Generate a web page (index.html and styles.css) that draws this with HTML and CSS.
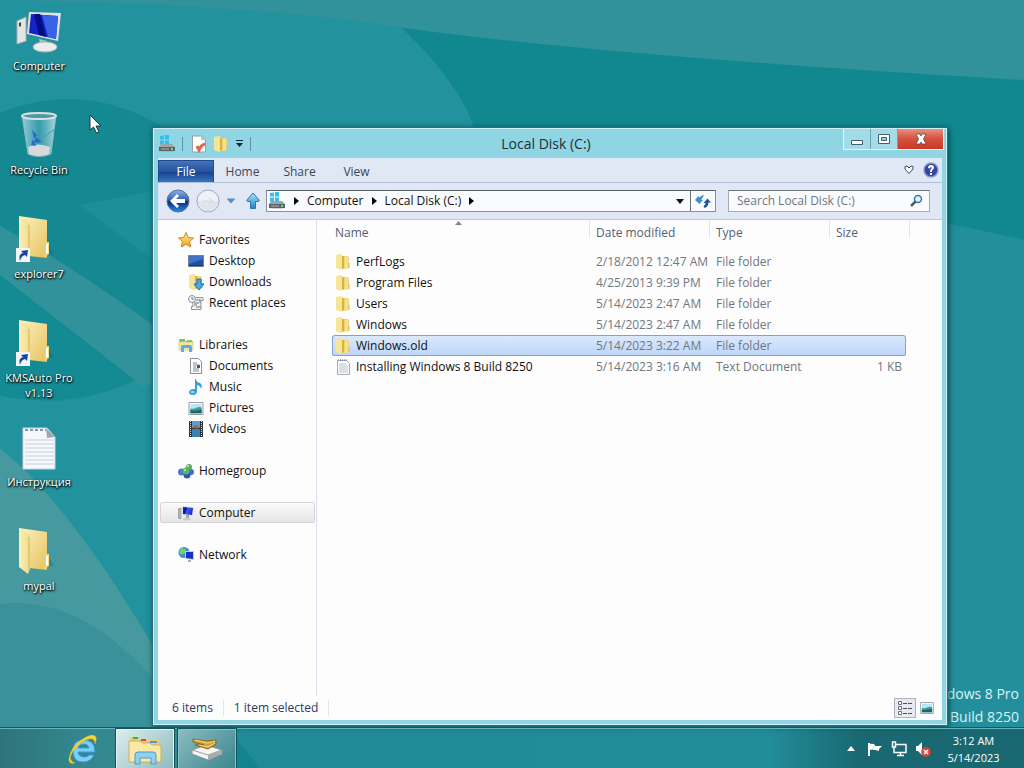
FILE: index.html
```html
<!DOCTYPE html>
<html lang="en">
<head>
<meta charset="utf-8">
<title>Local Disk (C:)</title>
<link rel="stylesheet" href="styles.css">
</head>
<body>
<svg class="defs" width="0" height="0" aria-hidden="true">
  <defs>
    <linearGradient id="gFold" x1="0" x2="1" y2="1"><stop offset="0" stop-color="#fdf3c0"/><stop offset="1" stop-color="#e6c260"/></linearGradient>
    <linearGradient id="gFlap" x1="0" x2="1"><stop offset="0" stop-color="#fbf0b8"/><stop offset="1" stop-color="#f0da8c"/></linearGradient>
    <linearGradient id="gGrey" x1="0" x2="1"><stop offset="0" stop-color="#fafafa"/><stop offset="1" stop-color="#b4b8ba"/></linearGradient>
    <linearGradient id="gScreen" x1="0" x2="1" y2=".3"><stop offset="0" stop-color="#1428c8"/><stop offset=".4" stop-color="#0a10a0"/><stop offset=".45" stop-color="#3a62e8"/><stop offset="1" stop-color="#1a30d0"/></linearGradient>
    <linearGradient id="gBlue" x1="0" x2="0" y2="1"><stop offset="0" stop-color="#8fb4e8"/><stop offset=".48" stop-color="#2a58b0"/><stop offset=".52" stop-color="#0a2878"/><stop offset="1" stop-color="#2c8ce8"/></linearGradient>
    <linearGradient id="gSky" x1="0" x2="0" y2="1"><stop offset="0" stop-color="#a8e6fa"/><stop offset="1" stop-color="#1f84c8"/></linearGradient>
    <linearGradient id="gGlass" x1="0" x2="1"><stop offset="0" stop-color="#b8e0ec" stop-opacity=".8"/><stop offset=".5" stop-color="#5fb0c4" stop-opacity=".5"/><stop offset="1" stop-color="#c4e6ee" stop-opacity=".85"/></linearGradient>
    <linearGradient id="gStar" x1="0" x2="0" y2="1"><stop offset="0" stop-color="#fff08a"/><stop offset="1" stop-color="#f5a020"/></linearGradient>
    <symbol id="bigFolder" viewBox="0 0 48 48">
      <path d="M30 41l9-4-5-7z" fill="#0c5560" opacity=".25"/>
      <path d="M4 0l28 4v38l-18-2z" fill="url(#gFold)"/>
      <path d="M31 26h3v12l-4 3z" fill="#f3dc8c"/><path d="M31 28h2v9h-2z" fill="#fff"/>
      <path d="M4 0l9 6q2 1 2 4v31l-2 5L4 39z" fill="url(#gFlap)"/>
      <path d="M14 9v34" stroke="#d8b458"/>
    </symbol>
    <symbol id="shortcut" viewBox="0 0 14 14">
      <path d="M0 0h14v14H0z" fill="#f4f6f8"/>
      <path d="M4 13q-2-7 3-8L5 3l7-1-1 7-2-2q-4 1-5 6z" fill="#1b4697"/>
    </symbol>
    <symbol id="folder" viewBox="0 0 16 16">
      <path d="M6 2h7l1 2v10l-7 1z" fill="#ecd477"/>
      <path d="M1 1l5-1 2 2v12l-2 2-5-2z" fill="#f6e596"/><path d="M7 2h2v12l-2 1z" fill="#d9b340"/><path d="M10 3h3v8l1 3-4 1z" fill="#f5e18b"/><path d="M14 9v5" stroke="#cfb874"/>
    </symbol>
    <symbol id="textDoc" viewBox="0 0 16 16">
      <path d="M2.500 1.500h9l3 3v11h-12z" fill="#fafbfc" stroke="#a3acb1"/>
      <path d="M4 5h7M4 7h9M4 9h9M4 11h9M4 13h9" stroke="#bcc5cc"/><path d="M3 1h9" stroke="#67747c" stroke-dasharray="1 1"/>
    </symbol>
    <symbol id="drive" viewBox="0 0 18 18">
      <path d="M2 1l4-.5v4H2zM7 0l4-.5V4.500H7zM2 5.500h4v4H2zM7 5.500h4v4H7z" fill="#35bff0"/>
      <path d="M3 9h11l3 3v4q-8 1-16 0v-4z" fill="#9da5a8"/><path d="M1 12h16v4H1z" fill="#59646a"/><path d="M3 14h8" stroke="#a8b4b8"/><path d="M13 13h2v2h-2z" fill="#63e06a"/>
    </symbol>
    <symbol id="pc" viewBox="0 0 16 16">
      <path d="M0 4l3-1v11l-3-1z" fill="#b4b8bc" stroke="#73787c" stroke-width=".5"/>
      <path d="M4 1l12 1-1 9-11-1z" fill="#dcdfe2"/><path d="M5 2l10 1-1 7-9-1z" fill="url(#gScreen)"/>
      <path d="M8 10h3v3h-3z" fill="#9fa4a8"/><ellipse cx="9" cy="14" rx="4" ry="1.500" fill="#c8ccd0"/>
    </symbol>
    <symbol id="picture" viewBox="0 0 16 14">
      <path d="M.5.500h15v13H.5z" fill="#fff" stroke="#8a9398"/><path d="M2 2h12v10H2z" fill="#b9e4f6"/><path d="M2 7q4 1 7-1 3-1 5 0v6H2z" fill="#3c9c98"/><path d="M2 9q5 1 12-1v4H2z" fill="#1f6668"/>
    </symbol>
  </defs>
</svg>

<main class="desktop">
  <svg class="wallpaper" viewBox="0 0 1024 768" preserveAspectRatio="none" aria-hidden="true">
    <path d="M0 0h1024v768H0z" fill="#118890"/>
    <path d="M0 0h370Q455 70 475 130L153 400H0z" fill="#22929e"/>
    <path d="M0 0h1024v80Q600 56 390 26 250 4 0 0z" fill="#31929b"/>
    <path d="M0 113Q80 80 160 125V340L0 225z" fill="#148991"/>
    <path d="M80 205l80-15v75z" fill="#1d8f99"/>
    <path d="M0 226Q70 265 160 330V400L110 362 0 275z" fill="#32929b"/>
    <path d="M0 275l135 105q-60 30-135 16z" fill="#148b94"/>
    <path d="M0 396q80 14 160-15v270L0 560z" fill="#22929e"/>
    <path d="M0 448Q70 505 153 646L200 728H0z" fill="#46999f"/>
    <path d="M0 604q100-12 190 124l30 40H0z" fill="#3a919a"/>
    <path d="M152 640l50 128h872V250L940 222v506z" fill="#238f9c"/>
    <path d="M225 725l35 43H210z" fill="#118890"/>
  </svg>

  <div class="watermark"><p>Windows 8 Pro</p><p>Build 8250</p></div>

  <nav class="shortcuts" aria-label="Desktop">
    <a class="shortcut" href="#">
      <svg viewBox="0 0 48 48"><path d="M2 13l9-4v24l-9 3z" fill="#e4e4e2" stroke="#a9acac"/><path d="M4 15l2-1v4l-2 1z" fill="#444"/><path d="M14 4l32 1-3 28-31-7z" fill="#dfe2e0"/><path d="M16 6l27 2-2 23-27-6z" fill="#1424c4"/><path d="M19 6l6 0 6 23-7-2z" fill="#050c84"/><path d="M27 7l16 1-2 23-8-2z" fill="#3863e4"/><path d="M24 31l8 2v6h-6z" fill="#b9bdbc"/><ellipse cx="30" cy="39" rx="12" ry="5" fill="#eceeec" stroke="#afb5b3"/></svg>
      <span>Computer</span></a>
    <a class="shortcut" href="#">
      <svg viewBox="0 0 48 48"><path d="M7 3h34l-5 39q-12 5-23 0z" fill="url(#gGlass)" stroke="#91bac4"/><path d="M13 35q10-5 22 0l-1 7q-10 4-20 0z" fill="#d6dadb"/><ellipse cx="24" cy="4" rx="17" ry="3" fill="#4d9aa8" stroke="#d8e1e3" stroke-width="2"/><path d="M17 18l5 5-3 4zM21 25l6 5-8 1zM18 27l-2 6 5 1z" fill="#2b68cc"/><path d="M40 17L27 26" stroke="#4a9cac"/></svg>
      <span>Recycle Bin</span></a>
    <a class="shortcut" href="#">
      <svg viewBox="0 0 48 48"><use href="#bigFolder" width="48" height="48"/><use href="#shortcut" x="1" y="32" width="14" height="14"/></svg>
      <span>explorer7</span></a>
    <a class="shortcut" href="#">
      <svg viewBox="0 0 48 48"><use href="#bigFolder" width="48" height="48"/><use href="#shortcut" x="1" y="32" width="14" height="14"/></svg>
      <span>KMSAuto Pro v1.13</span></a>
    <a class="shortcut" href="#">
      <svg viewBox="0 0 48 48"><path d="M8 4h24l8 9v32H8z" fill="#f6f8fc" stroke="#c6d2dc"/><path d="M31 4l1 10 8-1z" fill="#9aa8b0"/><path d="M10 16h29M10 20h29M10 24h29M10 28h29M10 32h29M10 36h29M10 40h29" stroke="#c2cfe0"/><path d="M10 6h21" stroke="#7f9cac" stroke-width="2" stroke-dasharray="3 2"/></svg>
      <span>Инструкция</span></a>
    <a class="shortcut" href="#">
      <svg viewBox="0 0 48 48"><use href="#bigFolder" width="48" height="48"/></svg>
      <span>mypal</span></a>
  </nav>

  <svg class="pointer" viewBox="0 0 13 20" aria-hidden="true"><path d="M1 1v15l3.500-3 3 6 2.500-1-3-6H12z" fill="#fff" stroke="#123c42"/></svg>

  <section class="window" aria-label="Local Disk (C:)">
    <header class="titlebar">
      <div class="quick">
        <svg width="18" height="18"><use href="#drive"/></svg>
        <i class="bar"></i>
        <button aria-label="Properties"><svg width="16" height="18" viewBox="0 0 16 18"><path d="M1.500 1h9l4 4v12h-13z" fill="#fff" stroke="#969fa6"/><path d="M10 1v4h4z" fill="#b9c4ca"/><path d="M6 11l2 4q2-5 6-6" fill="none" stroke="#e0654c" stroke-width="3"/></svg></button>
        <button aria-label="New folder"><svg width="16" height="18" viewBox="0 0 16 16"><use href="#folder"/></svg></button>
        <button aria-label="Customize"><svg width="9" height="9" viewBox="0 0 9 9"><path d="M1 1h7v1H1zM1 4h7L4.500 8z" fill="#123"/></svg></button>
        <i class="bar"></i>
      </div>
      <h1>Local Disk (C:)</h1>
      <div class="controls">
        <button aria-label="Minimize"><svg width="14" height="12" viewBox="0 0 14 12"><path d="M1.500 7.500h11v4h-11z" fill="#fff" stroke="#42606c"/></svg></button>
        <button aria-label="Maximize"><svg width="14" height="12" viewBox="0 0 14 12"><path d="M1.500 1.500h11v9h-11z" fill="#fff" stroke="#42606c"/><path d="M4.500 4.500h5v3h-5z" fill="#8fd5e3" stroke="#42606c"/></svg></button>
        <button class="close" aria-label="Close"><svg width="14" height="12" viewBox="0 0 14 12"><path d="M2 1h4l1 2 1-2h4L9.500 6l2.500 5H8L7 9l-1 2H2l2.500-5z" fill="#fff" stroke="#6d4545" stroke-width=".8"/></svg></button>
      </div>
    </header>

    <div class="ribbon">
      <button class="file">File</button><button>Home</button><button>Share</button><button>View</button>
      <span class="grow"></span>
      <button class="tool" aria-label="Expand the ribbon"><svg width="10" height="10" viewBox="0 0 10 10"><path d="M1 1.500l2-.5 2 2 2-2 2 .5V4L5 8.500 1 4z" fill="#fff" stroke="#3c4a64"/></svg></button>
      <button class="tool" aria-label="Help"><svg width="16" height="16" viewBox="0 0 16 16"><circle cx="8" cy="8" r="7" fill="#3444a8" stroke="#8f9bc8" stroke-width="1.500"/><path d="M5 6q0-3 3-3t3 2.500Q11 7 9 8.500V10H7q0-3 1.500-3.500Q9 5 8 5T7 6.500zM7 11h2v2H7z" fill="#fff"/></svg></button>
    </div>

    <div class="navbar">
      <button aria-label="Back"><svg width="24" height="24" viewBox="0 0 24 24"><circle cx="12" cy="12" r="11" fill="url(#gBlue)" stroke="#53719c"/><path d="M4 12l7-7 2 2-3 3h9v4h-9l3 3-2 2z" fill="#fff"/></svg></button>
      <button aria-label="Forward"><svg width="24" height="24" viewBox="0 0 24 24"><circle cx="12" cy="12" r="11" fill="#eef1f7" stroke="#9da8ba"/><path d="M2 12h20a10 10 0 0 1-20 0z" fill="#dfe4ee"/><path d="M6 12h10M13 9l4 3-4 3" fill="none" stroke="#d3d9e4"/></svg></button>
      <button aria-label="Recent locations"><svg width="10" height="6" viewBox="0 0 10 6"><path d="M.5.500h9L5 5.500z" fill="#5293c4"/></svg></button>
      <button class="up" aria-label="Up"><svg width="16" height="18" viewBox="0 0 16 18"><path d="M8 1l6.500 7.500-1.500 1H10.500V16.500h-5V9.500H3l-1.500-1z" fill="url(#gSky)" stroke="#2878b4"/></svg></button>
      <div class="address">
        <svg width="18" height="18"><use href="#drive"/></svg>
        <svg class="arrow" viewBox="0 0 5 8"><path d="M0 0l5 4-5 4z"/></svg>
        <button>Computer</button>
        <svg class="arrow" viewBox="0 0 5 8"><path d="M0 0l5 4-5 4z"/></svg>
        <button>Local Disk (C:)</button>
        <svg class="arrow" viewBox="0 0 5 8"><path d="M0 0l5 4-5 4z"/></svg>
        <span class="grow"></span>
        <button class="drop" aria-label="Previous locations"><svg width="8" height="5" viewBox="0 0 8 5"><path d="M0 0h8L4 5z" fill="#111"/></svg></button>
        <button class="refresh" aria-label="Refresh"><svg width="16" height="14" viewBox="0 0 16 14"><path d="M0 6l3.500-4 1 1.500Q6 1 9 1L7.500 4q-1 0-1 2H8L4.500 10z" fill="#3d8fce"/><path d="M16 8.500l-3.500-4L8.500 9h2q0 2-2 3l1 2q3.500-1 4-5.500z" fill="#1e56a0"/></svg></button>
      </div>
      <label class="search"><input type="text" placeholder="Search Local Disk (C:)" aria-label="Search Local Disk (C:)"><svg width="14" height="14" viewBox="0 0 14 14"><circle cx="9" cy="5" r="3.500" fill="#e2f2fa" stroke="#3c78a4" stroke-width="1.500"/><path d="M6.500 7.500L2 12" stroke="#45606e" stroke-width="2.500"/></svg></label>
    </div>

    <div class="body">
      <nav class="tree" aria-label="Navigation pane">
        <ul>
          <li><a href="#"><svg viewBox="0 0 16 16"><path d="M8 .5l2.200 5 5.300.500-4 3.600 1.300 5.400L8 12.200 3.200 15l1.300-5.400L.5 6l5.300-.5z" fill="url(#gStar)" stroke="#c98426"/></svg>Favorites</a></li>
          <li class="sub"><a href="#"><svg viewBox="0 0 16 16"><path d="M.5 2.500h15v11H.5z" fill="#254da4" stroke="#6f8294"/><path d="M1 3h14v3L1 11z" fill="#4470c8"/><path d="M1 12.500h14" stroke="#233860"/></svg>Desktop</a></li>
          <li class="sub"><a href="#"><svg viewBox="0 0 16 16"><use href="#folder" width="16" height="16"/><path d="M9 5h4v5h3l-5 6-5-6h3z" fill="#4da9e4" stroke="#1d6eaa"/></svg>Downloads</a></li>
          <li class="sub"><a href="#"><svg viewBox="0 0 16 16"><path d="M4 2.500h11v3h-2v9H3.500v-3H5z" fill="#f0f2f3" stroke="#8d979c"/><path d="M6 8h5M6 10h3M8 12h5" stroke="#6b777e"/><circle cx="4" cy="4" r="3.500" fill="#eef2f4" stroke="#8d979c"/><path d="M4 2v2h2M8 5h4M12 4v4" fill="none" stroke="#77848a"/></svg>Recent places</a></li>
        </ul>
        <ul>
          <li><a href="#"><svg viewBox="0 0 16 16"><path d="M1 2h5l1 2h8v9H1z" fill="#cdbf62"/><path d="M1 5h14v8H1z" fill="#f3e8a2" stroke="#cbbb68" stroke-width=".5"/><path d="M2 3h5M9 4h5" stroke="#6fb45e" stroke-width="1.500"/><path d="M3 15V10q0-2 2-2h7q2 0 2 2v5h-3v-4H6v4z" fill="#58aee0"/></svg>Libraries</a></li>
          <li class="sub"><a href="#"><svg viewBox="0 0 16 16"><path d="M2.500 .5h8l3 3v12h-11z" fill="#fff" stroke="#86929a"/><path d="M5 5h4M5 7h6M5 9h3M5 11h6M5 13h6" stroke="#7d8b94"/><path d="M9 7h3v3H9z" fill="#4a5c68"/></svg>Documents</a></li>
          <li class="sub"><a href="#"><svg viewBox="0 0 16 16"><path d="M8 0q0 3 4 4 3 2 1 6 0-3-4-4v6q0 4-4 4-4 0-4-2.500 0-3.500 5-3.500H7V0z" fill="#3d9ddb"/><ellipse cx="4.500" cy="13" rx="2" ry="1" fill="#9bdcf6"/></svg>Music</a></li>
          <li class="sub"><a href="#"><svg viewBox="0 0 16 16"><use href="#picture" y="2" width="16" height="13"/></svg>Pictures</a></li>
          <li class="sub"><a href="#"><svg viewBox="0 0 16 16"><path d="M1 0h14v16H1z" fill="#2d3336"/><path d="M4 0h8v7H4z" fill="#5a9dcc"/><path d="M4 8h8v8H4z" fill="#3c80b4"/><path d="M4 6l4-2 4 2-3 2z" fill="#8d6e52"/><path d="M2.500 0v16M13.500 0v16" stroke="#d8dcde" stroke-dasharray="1 1"/></svg>Videos</a></li>
        </ul>
        <ul><li><a href="#"><svg viewBox="0 0 16 16"><circle cx="11" cy="4" r="3" fill="#5fa867"/><circle cx="3.500" cy="9" r="3.500" fill="#4e79d0"/><circle cx="13" cy="9" r="3" fill="#456cc8"/><circle cx="9" cy="12" r="3.500" fill="#2f59b4"/><circle cx="8" cy="8" r="3.500" fill="#55b766"/><circle cx="10" cy="3" r="1" fill="#c5efc9"/><circle cx="7" cy="7" r="1" fill="#c5efc9"/></svg>Homegroup</a></li></ul>
        <ul><li><a class="current" href="#"><svg viewBox="0 0 16 16"><use href="#pc" width="16" height="16"/></svg>Computer</a></li></ul>
        <ul><li><a href="#"><svg viewBox="0 0 16 16"><circle cx="6" cy="5.500" r="5.500" fill="#3c90c6"/><path d="M3 1l5 1-1 4-4 2-2-3z" fill="#77c883"/><path d="M7 4l9 0v9l-9-1z" fill="#c8cdd2"/><path d="M8 5h7v7l-7-1z" fill="#1a2fc6"/><path d="M10 13h3v2h-3z" fill="#a9afb4"/></svg>Network</a></li></ul>
      </nav>

      <div class="files">
        <table>
          <thead><tr><th class="name">Name<svg viewBox="0 0 7 4"><path d="M0 4l3.500-4L7 4z" fill="#7b8a99"/></svg></th><th class="date">Date modified</th><th class="type">Type</th><th class="size">Size</th></tr></thead>
          <tbody>
            <tr><td><svg><use href="#folder"/></svg>PerfLogs</td><td>2/18/2012 12:47 AM</td><td>File folder</td><td></td></tr>
            <tr><td><svg><use href="#folder"/></svg>Program Files</td><td>4/25/2013 9:39 PM</td><td>File folder</td><td></td></tr>
            <tr><td><svg><use href="#folder"/></svg>Users</td><td>5/14/2023 2:47 AM</td><td>File folder</td><td></td></tr>
            <tr><td><svg><use href="#folder"/></svg>Windows</td><td>5/14/2023 2:47 AM</td><td>File folder</td><td></td></tr>
            <tr class="selected"><td><svg><use href="#folder"/></svg>Windows.old</td><td>5/14/2023 3:22 AM</td><td>File folder</td><td></td></tr>
            <tr><td><svg><use href="#textDoc"/></svg>Installing Windows 8 Build 8250</td><td>5/14/2023 3:16 AM</td><td>Text Document</td><td>1 KB</td></tr>
          </tbody>
        </table>
      </div>
    </div>

    <footer class="status">
      <span>6 items</span><span>1 item selected</span>
      <span class="grow"></span>
      <button class="on" aria-label="Details view"><svg width="16" height="14" viewBox="0 0 16 14"><path d="M1.500.500h3v3h-3zM1.500 5.500h3v3h-3zM1.500 10.500h3v3h-3z" fill="#fff" stroke="#69707c"/><path d="M6 2.500h10M6 7.500h10M6 12.500h10" stroke="#4a5060" stroke-dasharray="4 1"/></svg></button>
      <button aria-label="Large icons view"><svg width="14" height="12" viewBox="0 0 16 14"><use href="#picture" width="16" height="14"/></svg></button>
    </footer>
  </section>
</main>

<footer class="taskbar">
  <button class="task plain" aria-label="Internet Explorer"><svg width="32" height="32" viewBox="0 0 32 32"><path d="M28 19H11q1 5 6 5 4 0 5-2h5q-3 7-11 7-10 0-10-11Q6 7 16 7q12 0 12 12zM11 15h11q-1-4-5-4-5 0-6 4z" fill="#7ccff8" stroke="#3a9cd8"/><path d="M8 30q-7 2-6-5Q4 14 14 7 26-1 29 4q1 3-1 7 0-6-6-5-8 2-14 10-6 7-4 11 1 2 4 3z" fill="#f4d63c" stroke="#c8a41c" stroke-width=".5"/></svg></button>
  <button class="task active" aria-label="File Explorer"><svg width="34" height="32" viewBox="0 0 34 32"><path d="M2 4h9l2 3h18v20H2z" fill="#e9cd7c"/><path d="M5 4h5v2H5z" fill="#3cae48"/><path d="M13 6h5v2h-5z" fill="#e0492c"/><path d="M22 8h7v2h-7z" fill="#4a96dc"/><path d="M1 8h11l2 2h8l2 2h9v17H1z" fill="#f9e8a6" stroke="#d3ae57"/><path d="M7 31V22q0-3 3-3h15q3 0 3 3v9h-5v-6H12v6z" fill="#8fd0f0" stroke="#4a9cc8"/></svg></button>
  <button class="task" aria-label="Disk tool"><svg width="32" height="24" viewBox="0 0 32 24"><path d="M1 13l14-5 16 5v4l-14 6L1 17z" fill="#f4f5f5" stroke="#8a9292"/><path d="M1 13l16 5 14-5" fill="none" stroke="#9aa2a4"/><path d="M17 18v5l14-6v-4z" fill="#a7adb0"/><path d="M2 2l14 2 9-1v4l-8 5-13-4 9 0L2 5z" fill="#d3a038" stroke="#8c661c"/><path d="M4 3l13 3 7-2M8 8l9 2 7-4" stroke="#f6dc88" fill="none"/></svg></button>
  <span class="grow"></span>
  <div class="tray">
    <button aria-label="Show hidden icons"><svg width="8" height="5" viewBox="0 0 8 5"><path d="M0 5l4-5 4 5z" fill="#fff"/></svg></button>
    <button aria-label="Action Center"><svg width="16" height="16" viewBox="0 0 16 16"><path d="M1 2h2v13H1zM3 3q3-1 5 1v1h7l-3 3v2q-3-1-4-1-3-1-5 0z" fill="#fff"/></svg></button>
    <button aria-label="Network"><svg width="16" height="16" viewBox="0 0 16 16"><path d="M5 3.500h10v8H5" fill="none" stroke="#fff" stroke-width="1.500"/><path d="M1.500 1h3v5h-3zM3 6v5.500h2M6 14.500h7M9.500 12v2" fill="none" stroke="#fff" stroke-width="1.500"/></svg></button>
    <button aria-label="Volume muted"><svg width="16" height="16" viewBox="0 0 16 16"><path d="M1 5h2l4-4v13l-4-4H1z" fill="#fff"/><circle cx="11" cy="11" r="4.800" fill="#dc4630"/><path d="M9 9l4 4M13 9l-4 4" stroke="#fff" stroke-width="1.500"/></svg></button>
  </div>
  <time class="clock"><span>3:12 AM</span><span>5/14/2023</span></time>
</footer>
</body>
</html>
```
FILE: styles.css
```css
* { box-sizing: border-box; }
body {
  margin: 0;
  height: 100vh;
  display: flex;
  flex-direction: column;
  overflow: hidden;
  font-family: "Open Sans", "Noto Sans", sans-serif;
  font-size: 12px;
  line-height: 16px;
  color: #111;
  background: #118890;
}
h1, p, ul { margin: 0; padding: 0; }
ul { list-style: none; }
a { color: inherit; text-decoration: none; }
button {
  font: inherit;
  color: inherit;
  margin: 0;
  padding: 0;
  border: 0;
  background: none;
  display: flex;
  align-items: center;
  justify-content: center;
}
svg { flex: none; display: block; }
.defs { position: absolute; }
.grow { flex: 1; }

.desktop { flex: 1; min-height: 0; position: relative; }
.wallpaper { position: absolute; left: 0; top: 0; width: 100vw; height: 100vh; }
.watermark {
  position: absolute;
  right: 5px;
  bottom: 0;
  text-align: right;
  font-size: 14px;
  line-height: 23px;
  color: #dcf2f4;
}
.shortcuts { position: relative; width: 78px; }
.shortcut {
  display: flex;
  flex-direction: column;
  align-items: center;
  height: 104px;
  padding-top: 8px;
  gap: 2px;
  color: #fff;
  font-size: 11px;
  line-height: 15px;
  text-align: center;
  text-shadow: 1px 1px 2px #000, 0 1px 2px #000;
}
.shortcut svg { width: 48px; height: 48px; }
.pointer { position: absolute; left: 89px; top: 114px; width: 13px; height: 20px; }

.window {
  position: absolute;
  left: 153px;
  top: 128px;
  right: 77px;
  bottom: 3px;
  display: flex;
  flex-direction: column;
  padding: 0 4px 4px;
  border: 1px solid #d2f0f4;
  background: #90d5e4;
  box-shadow: 0 0 0 1px #2b7078, 1px 1px 6px 1px #084850;
}
.titlebar { display: grid; grid-template-columns: 1fr auto 1fr; height: 29px; align-items: center; }
.titlebar h1 { padding-right: 8px; font-size: 14px; font-weight: 400; color: #222e34; line-height: 20px; }
.quick { display: flex; align-items: center; gap: 6px; }
.bar { width: 1px; height: 14px; margin: 0 2px 0 0; background: #6096a4; }
.controls { display: flex; justify-self: end; align-self: start; margin-right: -2px; border: 1px solid #e0f6fa; border-top: 0; }
.controls button { width: 27px; height: 20px; border-right: 1px solid #6aa4b2; background: #a4dbe8; }
.controls .close { width: 45px; border: 0; background: linear-gradient(#e89080, #d4503c 50%, #c83a2a); }

.ribbon {
  display: flex;
  align-items: stretch;
  height: 25px;
  background: #e1e8f5;
  border-bottom: 1px solid #b0c0d8;
  color: #3b4658;
}
.ribbon button { width: 57px; padding-top: 3px; }
.ribbon .file {
  margin-top: 2px;
  padding: 0;
  width: 56px;
  color: #fff;
  border: 1px solid #244a90;
  border-bottom: 0;
  background: linear-gradient(#4474b8, #2452a0 50%, #17408c 51%, #3a74c0);
}
.ribbon .tool { width: 22px; padding: 0; }

.navbar {
  display: flex;
  align-items: center;
  height: 37px;
  padding: 0 12px 0 8px;
  gap: 6px;
  background: #e1e7f4;
  border-bottom: 1px solid #bccadd;
}
.navbar .up { width: 22px; margin: 0 -4px 0 0; }
.address {
  flex: 1;
  display: flex;
  align-items: center;
  height: 22px;
  padding-left: 1px;
  gap: 8px;
  border: 1px solid #8a909c;
  border-top-color: #5c6068;
  background: #fafbfd;
}
.arrow { width: 5px; height: 8px; }
.address .refresh { width: 25px; height: 20px; border-left: 1px solid #6c727c; }
.address .drop { margin-right: -2px; }
.search {
  display: flex;
  align-items: center;
  width: 202px;
  height: 22px;
  margin-left: 6px;
  padding: 0 6px 0 8px;
  border: 1px solid #a6acb8;
  border-top-color: #6e747c;
  background: #fafbfd;
}
.search input { flex: 1; min-width: 0; padding: 0; border: 0; outline: 0; font: inherit; background: none; }
.search input::placeholder { color: #6f767e; opacity: 1; }

.body { flex: 1; min-height: 0; display: flex; background: #fdfdfe; }
.tree {
  width: 159px;
  padding: 9px 1px 0 2px;
  border-right: 1px solid #dbe0ea;
}
.tree ul { margin-bottom: 21px; }
.tree a {
  display: flex;
  align-items: center;
  gap: 5px;
  height: 21px;
  padding-left: 17px;
  border: 1px solid transparent;
  border-radius: 2px;
}
.tree .sub a { padding-left: 27px; }
.tree svg { width: 16px; height: 16px; }
.tree .current { border-color: #d6d6d8; background: linear-gradient(#fafafa, #e6e6e7); }

.files { flex: 1; padding-left: 15px; }
table { width: 574px; table-layout: fixed; border-collapse: separate; border-spacing: 0; }
th {
  position: relative;
  height: 31px;
  padding: 4px 6px 10px;
  text-align: left;
  vertical-align: top;
  line-height: 17px;
  font-weight: 400;
  color: #566072;
}
th::after { content: ""; position: absolute; right: 0; top: 0; width: 1px; height: 18px; background: #e2e6ee; }
.name { width: 258px; padding-left: 3px; }
.name svg { position: absolute; left: 50%; top: 1px; margin-left: -6px; width: 7px; height: 4px; }
.date, .type { width: 120px; }
.size::after { right: -4px; }
td { height: 21px; padding: 0 6px; color: #72777c; white-space: nowrap; line-height: 16px; }
td:first-child { display: flex; align-items: center; gap: 5px; padding-left: 3px; color: #111; }
td:last-child { text-align: right; padding-right: 4px; }
td svg { width: 16px; height: 16px; }
.selected { background: linear-gradient(#dce9fc, #bdd6f8); outline: 1px solid #7fa2d2; outline-offset: -1px; border-radius: 3px; }

.status {
  display: flex;
  align-items: center;
  height: 24px;
  padding: 0 4px;
  background: #fdfdfe;
  color: #2c3a5c;
}
.status > span:not(.grow) { padding: 0 10px; border-right: 1px solid #e4e7ee; }
.status button { width: 22px; height: 20px; border: 1px solid transparent; }
.status .on { border-color: #aeb2c0; background: #e8e9f0; }

.taskbar {
  position: relative;
  display: flex;
  height: 40px;
  padding-left: 54px;
  gap: 4px;
  border-top: 1px solid #68b4bc;
  box-shadow: 0 -1px 0 #135a62;
  background: linear-gradient(90deg, rgb(38 96 102 / 60%), rgb(38 110 116 / 30%) 8%, rgb(20 120 130 / 20%) 24%, rgb(20 130 140 / 10%) 75%, rgb(22 90 98 / 75%) 84%);
}
.task { width: 58px; border: 1px solid #8cc0c4; border-bottom: 0; background: linear-gradient(135deg, #8abcc0, #3c868e); box-shadow: 0 0 0 1px #14545c; }
.task.plain { border: 0; background: none; box-shadow: none; }
.task.active { border-color: #e4f2f2; background: linear-gradient(135deg, #dcecec, #8ebcc0); }
.tray { display: flex; align-items: center; gap: 8px; }
.tray button:first-child { margin-right: 4px; }
.clock {
  display: flex;
  flex-direction: column;
  justify-content: center;
  width: 89px;
  padding-right: 12px;
  font-size: 11px;
  line-height: 17px;
  text-align: center;
  color: #fff;
}
```
